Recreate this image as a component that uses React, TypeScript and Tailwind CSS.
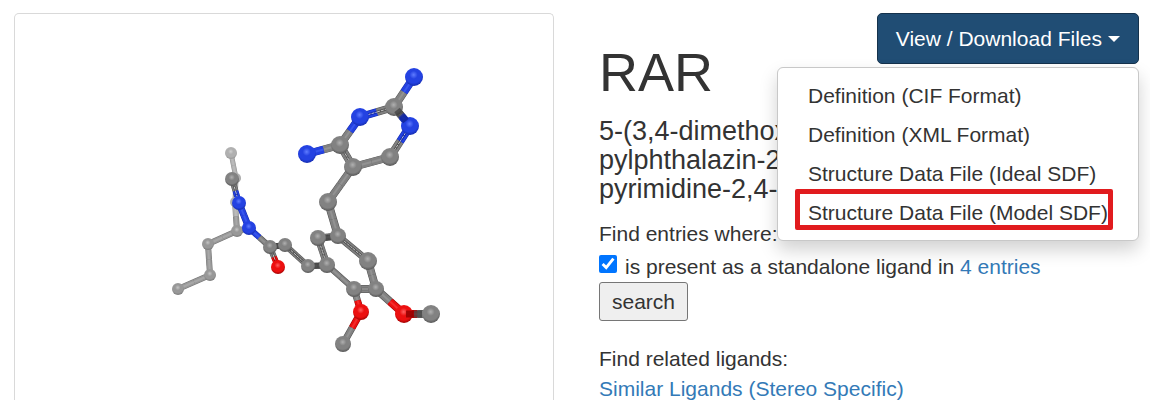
type Atom = [x: number, y: number, radius: number, tone: string];
type Bond = [from: string, to: string, width: number, double?: boolean];

const tones: Record<string, string[]> = {
  carbon: ['#b0b0b0', '#828282', '#505050'],
  mist: ['#d0d0d0', '#b0b0b0', '#929292'],
  haze: ['#c4c4c4', '#989898', '#747474'],
  nitrogen: ['#5f7cff', '#2442e2', '#1329a8'],
  oxygen: ['#ff6060', '#ec1010', '#960000'],
};

const atoms: Record<string, Atom> = {
  a1: [231, 153, 6, 'mist'],
  a2: [236, 178, 5, 'mist'],
  a3: [235, 202, 5, 'mist'],
  a4: [237, 231, 6, 'haze'],
  b1: [208, 244, 6, 'haze'],
  b2: [210, 275, 6, 'haze'],
  b3: [178, 289, 6, 'haze'],
  c1: [232, 179, 7, 'carbon'],
  n1: [239, 203, 7, 'nitrogen'],
  n2: [249, 228, 7, 'nitrogen'],
  d1: [270, 247, 7, 'carbon'],
  o1: [278, 267, 7, 'oxygen'],
  d2: [285, 245, 7, 'carbon'],
  d3: [308, 266, 7, 'carbon'],
  e1: [318, 238, 8, 'carbon'],
  e2: [327, 265, 8, 'carbon'],
  e3: [354, 289, 8, 'carbon'],
  e4: [376, 289, 8, 'carbon'],
  e5: [368, 261, 9, 'carbon'],
  e6: [338, 236, 8, 'carbon'],
  o2: [361, 312, 8, 'oxygen'],
  f1: [343, 344, 8, 'carbon'],
  o3: [404, 314, 9, 'oxygen'],
  f2: [431, 314, 9, 'carbon'],
  g1: [328, 202, 9, 'carbon'],
  h1: [353, 167, 9, 'carbon'],
  h2: [340, 145, 9, 'carbon'],
  h3: [360, 117, 9, 'nitrogen'],
  h4: [394, 107, 9, 'carbon'],
  h5: [410, 126, 9, 'nitrogen'],
  h6: [390, 157, 9, 'carbon'],
  n3: [307, 154, 9, 'nitrogen'],
  n4: [414, 77, 9, 'nitrogen'],
};

const bonds: Bond[] = [
  ['a1', 'a2', 5],
  ['a2', 'a3', 5],
  ['a3', 'a4', 6],
  ['a4', 'b1', 6],
  ['b1', 'b2', 6],
  ['b2', 'b3', 6],
  ['c1', 'n1', 6, true],
  ['a4', 'n2', 6],
  ['n1', 'n2', 7],
  ['n2', 'd1', 6],
  ['d1', 'o1', 6, true],
  ['d1', 'd2', 6],
  ['d2', 'd3', 6, true],
  ['d3', 'e2', 6],
  ['e1', 'e2', 7, true],
  ['e1', 'e6', 7],
  ['e6', 'e5', 7, true],
  ['e5', 'e4', 8],
  ['e4', 'e3', 8, true],
  ['e3', 'e2', 6],
  ['e3', 'o2', 7],
  ['o2', 'f1', 7],
  ['e4', 'o3', 8],
  ['o3', 'f2', 8],
  ['e6', 'g1', 8],
  ['g1', 'h1', 8],
  ['h1', 'h2', 8, true],
  ['h2', 'h3', 8],
  ['h3', 'h4', 8, true],
  ['h4', 'h5', 8],
  ['h5', 'h6', 8, true],
  ['h6', 'h1', 8],
  ['h2', 'n3', 8],
  ['h4', 'n4', 8],
];

function Half({ x1, y1, x2, y2, width, tone, double }: { x1: number; y1: number; x2: number; y2: number; width: number; tone: string; double?: boolean }) {
  const [light, mid, dark] = tones[tone];
  const ends = { x1, y1, x2, y2 };
  return (
    <g>
      <line {...ends} stroke={dark} strokeWidth={width} />
      <line {...ends} stroke={mid} strokeWidth={width - 1} />
      {double ? (
        <>
          <line {...ends} stroke={dark} strokeWidth={2.4} />
          <line {...ends} stroke="#e4e4e4" strokeWidth={1} strokeDasharray="3 1" opacity={0.8} />
        </>
      ) : (
        <line {...ends} stroke={light} strokeWidth={2} opacity={0.35} />
      )}
    </g>
  );
}

function Molecule() {
  return (
    <svg viewBox="15 14 538 386" className="block h-[386px] w-[538px] max-w-full" role="img" aria-label="RAR ligand">
      <defs>
        {Object.entries(tones).map(([name, [light, mid, dark]]) => (
          <radialGradient key={name} id={name} cx="0.48" cy="0.38" r="0.64">
            <stop offset="0" stopColor={light} />
            <stop offset="0.35" stopColor={mid} />
            <stop offset="0.7" stopColor={mid} />
            <stop offset="1" stopColor={dark} />
          </radialGradient>
        ))}
      </defs>
      {bonds.map(([from, to, width, double]) => {
        const [x1, y1, , toneA] = atoms[from];
        const [x2, y2, , toneB] = atoms[to];
        const mx = (x1 + x2) / 2;
        const my = (y1 + y2) / 2;
        return (
          <g key={from + to}>
            <Half x1={x1} y1={y1} x2={mx} y2={my} width={width} tone={toneA} double={double} />
            <Half x1={mx} y1={my} x2={x2} y2={y2} width={width} tone={toneB} double={double} />
          </g>
        );
      })}
      {/* bonds that recede from the viewer are in shadow */}
      <path d="M275 246h7M313 266h7M325 238l8-1" stroke="#303030" strokeWidth={6} opacity={0.65} />
      {Object.entries(atoms).map(([id, [x, y, r, tone]]) => (
        <circle key={id} cx={x} cy={y} r={r} fill={`url(#${tone})`} />
      ))}
      <path d="M397 110l4 5" stroke="#333" strokeWidth={7} opacity={0.6} />
      <path d="M401 115l5 6" stroke="#0f2396" strokeWidth={7} opacity={0.8} />
      <path d="M406 314h8" stroke="#8c0000" strokeWidth={7} opacity={0.8} />
      <path d="M414 314h8" stroke="#444" strokeWidth={7} opacity={0.8} />
    </svg>
  );
}

const files = [
  'Definition (CIF Format)',
  'Definition (XML Format)',
  'Structure Data File (Ideal SDF)',
  'Structure Data File (Model SDF)',
];

function DownloadMenu() {
  return (
    <div className="absolute top-0 right-0">
      <button type="button" aria-expanded="true" className="ml-auto flex h-[51px] items-center gap-[6px] rounded-[5px] border border-[#15324c] bg-[#204d74] px-[18px] text-[21px] text-white">
        View / Download Files
        <span className="border-x-[6px] border-t-[6px] border-x-transparent border-t-white" />
      </button>
      <ul className="absolute top-[54px] right-0 w-[362px] rounded-[6px] border border-[#c8c8c8] bg-white py-[8px] shadow-[0_9px_18px_rgba(0,0,0,0.18)]">
        {files.map((file, i) => (
          <li key={file} className="relative">
            <a href="#files" className="block px-[30px] text-[21px] leading-[39px] whitespace-nowrap">
              {file}
            </a>
            {i === 3 && <span className="pointer-events-none absolute -top-[4px] left-[17px] h-[41px] w-[318px] rounded-[2px] border-[5px] border-[#e11b1e]" />}
          </li>
        ))}
      </ul>
    </div>
  );
}

export default function App() {
  return (
    <main className="grid h-screen grid-cols-2 gap-[45px] overflow-hidden bg-white pt-[13px] pr-[11px] pl-[14px] font-['Liberation_Sans',Arial,sans-serif] text-[21px] leading-[30px] text-[#333]">
      <section className="overflow-hidden rounded-t-[5px] border border-b-0 border-[#d9d9d9]">
        <Molecule />
      </section>
      <section className="relative">
        <h1 className="mt-[29px] text-[54px] leading-[60px]">RAR</h1>
        <h4 className="mt-[15px] text-[27px] leading-[29px] whitespace-nowrap">
          5-(3,4-dimethox
          <br />
          pylphthalazin-2
          <br />
          pyrimidine-2,4-
        </h4>
        <p className="mt-[15px]">Find entries where: RAR</p>
        <form>
          <div className="mt-[3px] flex items-center gap-[8px]">
            <input id="standalone" type="checkbox" defaultChecked className="mb-[6px] size-[18px] accent-[#0075ff]" />
            <span>
              <label htmlFor="standalone">is present as a standalone ligand in</label>{' '}
              <a href="#entries" className="text-[#337ab7]">4 entries</a>
            </span>
          </div>
          <button type="button" className="block h-[39px] rounded-[3px] border border-[#767676] bg-[#efefef] px-[12px]">
            search
          </button>
        </form>
        <p className="mt-[23px]">Find related ligands:</p>
        <a href="#similar" className="text-[#337ab7]">Similar Ligands (Stereo Specific)</a>
        <DownloadMenu />
      </section>
    </main>
  );
}
